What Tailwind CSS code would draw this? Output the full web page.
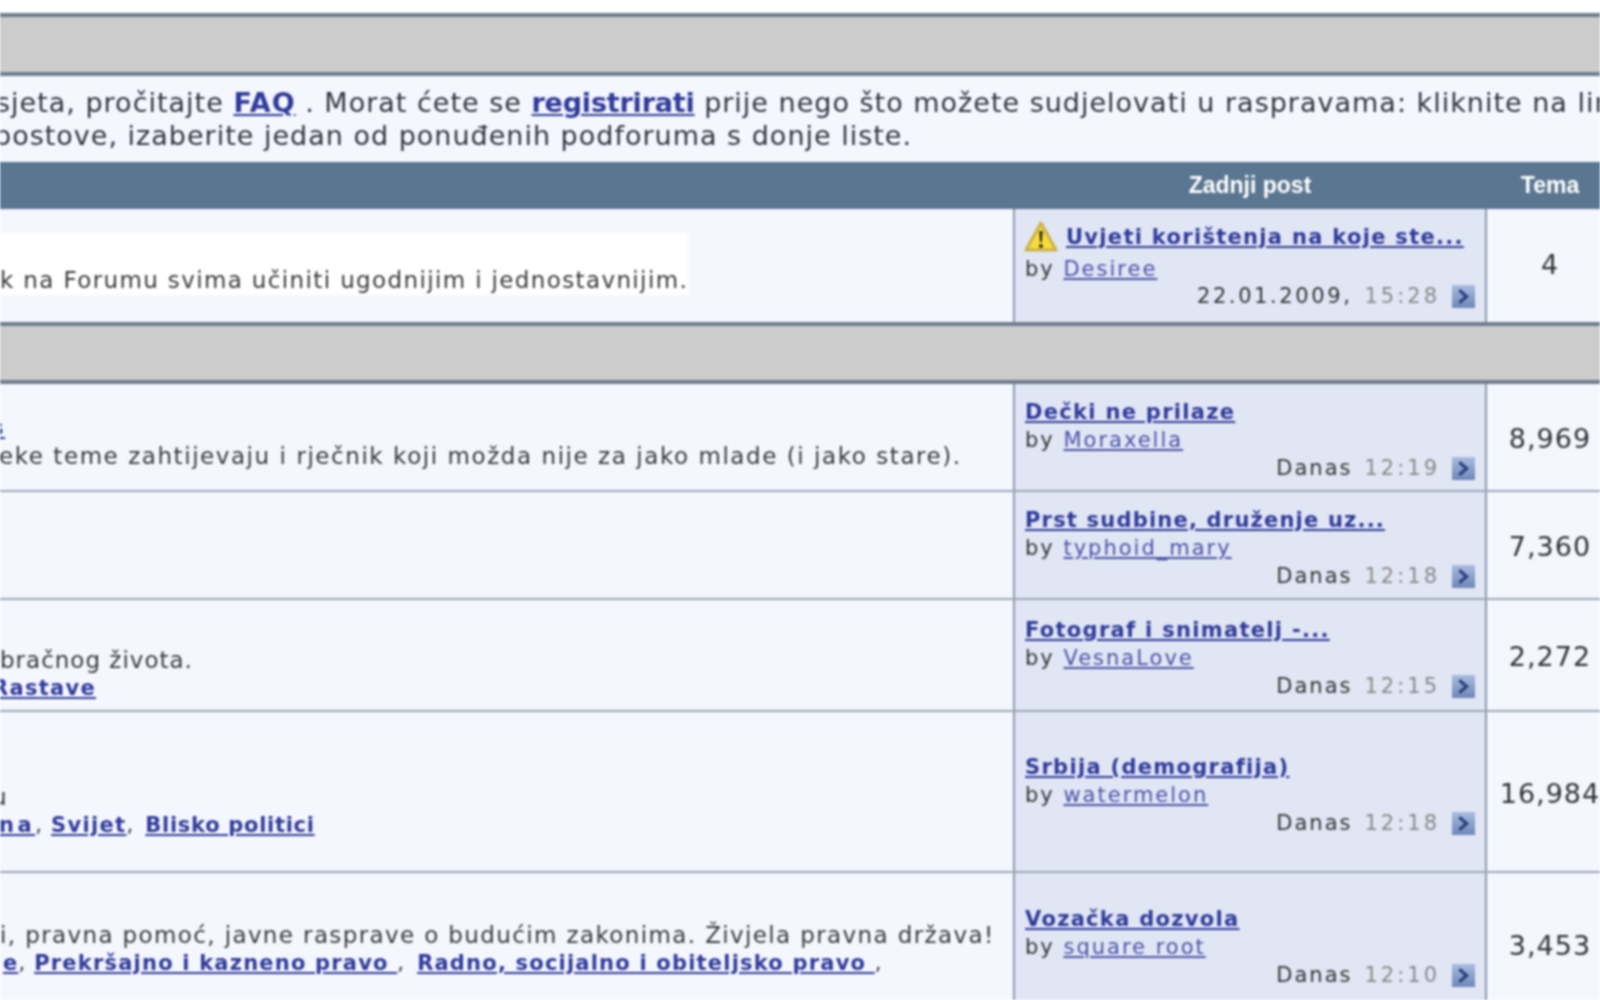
<!doctype html>
<html><head><meta charset="utf-8"><script src="https://cdn.jsdelivr.net/npm/@tailwindcss/browser@4"></script></head>
<body class="bg-white">
<div class="w-[1600px] h-[1000px] overflow-hidden bg-white font-['DejaVu_Sans',sans-serif] text-[#333] blur-[0.8px]">
  <div class="h-[13px]"></div>
  <div class="h-[63px] bg-[#cccccc] border-t-[4px] border-b-[4px] border-[#6f7d8e]"></div>
  <div class="h-[86px] bg-[#f5f7ff] pt-[11px] text-[27px] tracking-[1px] leading-[32px] whitespace-nowrap text-[#33333d]">
    <div class="-ml-[4px]">sjeta, pročitajte <a class="font-bold text-[#2f3a9a] underline">FAQ</a> . Morat ćete se <a class="font-bold text-[#2f3a9a] underline tracking-[-0.2px]">registrirati</a> prije nego što možete sudjelovati u raspravama: kliknite na link</div>
    <div class="-ml-[6px] mt-[1px]">postove, izaberite jedan od ponuđenih podforuma s donje liste.</div>
  </div>
  <div class="flex h-[47px] bg-[#5a7690] text-white font-bold text-[23px] items-center font-['Liberation_Sans',sans-serif]">
    <div class="w-[1013px] shrink-0"></div>
    <div class="w-[474px] shrink-0 text-center">Zadnji post</div>
    <div class="w-[126px] shrink-0 text-center">Tema</div>
  </div>
  <div class="flex h-[113px] bg-[#f5f7ff]">
    <div class="w-[1013px] shrink-0 pt-[24px]">
      <div class="w-[688px] h-[62px] bg-white text-[23px] pt-[33px] leading-[28px] tracking-[1.37px] whitespace-nowrap text-[#3a3a3a]">k na Forumu svima učiniti ugodnijim i jednostavnijim.</div>
    </div>
    <div class="w-[474px] shrink-0 bg-[#e1e6f4] border-x-[2px] border-[#8a9aae] px-[10px] pt-[14px] text-[21px] leading-[28px] tracking-[2px]">
      <div class="flex items-center gap-[7px] h-[28px] whitespace-nowrap">
        <svg width="36" height="34" viewBox="0 0 36 34" class="-ml-[2px] shrink-0"><path d="M18 3 L33 30 L3 30 Z" fill="#f6dc3a" stroke="#cdb04a" stroke-width="3" stroke-linejoin="round"/><path d="M16.4 11h3.2l-.7 11h-1.8z" fill="#222"/><circle cx="18" cy="26" r="1.9" fill="#222"/></svg>
        <a class="font-bold text-[#2f3a9a] underline tracking-[1.3px]">Uvjeti korištenja na koje ste...</a>
      </div>
      <div class="mt-[4px] whitespace-nowrap">by <a class="text-[#4a52a8] underline">Desiree</a></div>
      <div class="flex justify-end items-center gap-[12px] -mt-[1px] whitespace-nowrap"><span class="tracking-[2.6px]">22.01.2009,</span> <span class="text-[#888] tracking-[3px]">15:28</span><svg width="23" height="23" viewBox="0 0 22 22" class="shrink-0"><defs><linearGradient id="a" x1="0" y1="0" x2="0" y2="1"><stop offset="0" stop-color="#a9bde0"/><stop offset="1" stop-color="#6f86b8"/></linearGradient></defs><rect width="22" height="22" fill="url(#a)"/><path d="M7 5l7 6-7 6" fill="none" stroke="#2d3f7a" stroke-width="3"/></svg></div>
    </div>
    <div class="w-[126px] shrink-0 flex items-center justify-center text-[27px] tracking-[1px] pb-[-3px]">4</div>
  </div>
  <div class="h-[62px] bg-[#cccccc] border-t-[4px] border-b-[4px] border-[#6f7d8e]"></div>
  <div class="flex h-[108px] bg-[#f5f7ff] border-b-[2px] border-[#9aa6b8]">
    <div class="w-[1013px] shrink-0 text-[23px] leading-[28px] tracking-[1.56px] whitespace-nowrap text-[#3a3a3a] pt-[30px]">
      <div class="-ml-[9px] text-[21px]"><a class="font-bold text-[#2f3a9a] underline">s</a></div>
      <div class="-ml-[1px]">eke teme zahtijevaju i rječnik koji možda nije za jako mlade (i jako stare).</div>
    </div>
    <div class="w-[474px] shrink-0 bg-[#e1e6f4] border-x-[2px] border-[#8a9aae] px-[10px] pt-[14px] text-[21px] leading-[28px] tracking-[2px]">
      <a class="block font-bold text-[#2f3a9a] underline tracking-[1.3px]">Dečki ne prilaze</a>
      <div class="whitespace-nowrap">by <a class="text-[#4a52a8] underline">Moraxella</a></div>
      <div class="flex justify-end items-center gap-[12px] whitespace-nowrap">Danas <span class="text-[#888] tracking-[3px]">12:19</span><svg width="23" height="23" viewBox="0 0 22 22" class="shrink-0"><rect width="22" height="22" fill="url(#a)"/><path d="M7 5l7 6-7 6" fill="none" stroke="#2d3f7a" stroke-width="3"/></svg></div>
    </div>
    <div class="w-[126px] shrink-0 flex items-center justify-center text-[27px] tracking-[1px] pt-[4px]">8,969</div>
  </div>
  <div class="flex h-[108px] bg-[#f5f7ff] border-b-[2px] border-[#9aa6b8]">
    <div class="w-[1013px] shrink-0"></div>
    <div class="w-[474px] shrink-0 bg-[#e1e6f4] border-x-[2px] border-[#8a9aae] px-[10px] pt-[14px] text-[21px] leading-[28px] tracking-[2px]">
      <a class="block font-bold text-[#2f3a9a] underline tracking-[1.2px]">Prst sudbine, druženje uz...</a>
      <div class="whitespace-nowrap">by <a class="text-[#4a52a8] underline">typhoid_mary</a></div>
      <div class="flex justify-end items-center gap-[12px] whitespace-nowrap">Danas <span class="text-[#888] tracking-[3px]">12:18</span><svg width="23" height="23" viewBox="0 0 22 22" class="shrink-0"><rect width="22" height="22" fill="url(#a)"/><path d="M7 5l7 6-7 6" fill="none" stroke="#2d3f7a" stroke-width="3"/></svg></div>
    </div>
    <div class="w-[126px] shrink-0 flex items-center justify-center text-[27px] tracking-[1px] pt-[4px]">7,360</div>
  </div>
  <div class="flex h-[112px] bg-[#f5f7ff] border-b-[2px] border-[#9aa6b8]">
    <div class="w-[1013px] shrink-0 text-[23px] leading-[28px] tracking-[1px] whitespace-nowrap text-[#3a3a3a] pt-[46px]">
      <div>bračnog života.</div>
      <div class="-ml-[8px] text-[21px] tracking-[1.3px]"><a class="font-bold text-[#2f3a9a] underline">Rastave</a></div>
    </div>
    <div class="w-[474px] shrink-0 bg-[#e1e6f4] border-x-[2px] border-[#8a9aae] px-[10px] pt-[16px] text-[21px] leading-[28px] tracking-[2px]">
      <a class="block font-bold text-[#2f3a9a] underline tracking-[1.3px]">Fotograf i snimatelj -...</a>
      <div class="whitespace-nowrap">by <a class="text-[#4a52a8] underline">VesnaLove</a></div>
      <div class="flex justify-end items-center gap-[12px] whitespace-nowrap">Danas <span class="text-[#888] tracking-[3px]">12:15</span><svg width="23" height="23" viewBox="0 0 22 22" class="shrink-0"><rect width="22" height="22" fill="url(#a)"/><path d="M7 5l7 6-7 6" fill="none" stroke="#2d3f7a" stroke-width="3"/></svg></div>
    </div>
    <div class="w-[126px] shrink-0 flex items-center justify-center text-[27px] tracking-[1px] pt-[5px]">2,272</div>
  </div>
  <div class="flex h-[161px] bg-[#f5f7ff] border-b-[2px] border-[#9aa6b8]">
    <div class="w-[1013px] shrink-0 text-[23px] leading-[28px] tracking-[1.6px] whitespace-nowrap text-[#3a3a3a] pt-[71px]">
      <div class="-ml-[8px]">u</div>
      <div class="text-[21px] tracking-[1.3px] -ml-[1px]"><a class="font-bold text-[#2f3a9a] underline tracking-[3.5px]">na</a>, <a class="font-bold text-[#2f3a9a] underline">Svijet</a>, <a class="font-bold text-[#2f3a9a] underline tracking-[0.7px] ml-[3px]">Blisko politici</a></div>
    </div>
    <div class="w-[474px] shrink-0 bg-[#e1e6f4] border-x-[2px] border-[#8a9aae] px-[10px] pt-[41px] text-[21px] leading-[28px] tracking-[2px]">
      <a class="block font-bold text-[#2f3a9a] underline tracking-[1.3px]">Srbija (demografija)</a>
      <div class="whitespace-nowrap">by <a class="text-[#4a52a8] underline">watermelon</a></div>
      <div class="flex justify-end items-center gap-[12px] whitespace-nowrap">Danas <span class="text-[#888] tracking-[3px]">12:18</span><svg width="23" height="23" viewBox="0 0 22 22" class="shrink-0"><rect width="22" height="22" fill="url(#a)"/><path d="M7 5l7 6-7 6" fill="none" stroke="#2d3f7a" stroke-width="3"/></svg></div>
    </div>
    <div class="w-[126px] shrink-0 flex items-center justify-center text-[27px] tracking-[1px] pt-[6px]">16,984</div>
  </div>
  <div class="flex h-[140px] bg-[#f5f7ff]">
    <div class="w-[1013px] shrink-0 text-[23px] leading-[28px] tracking-[1.38px] whitespace-nowrap text-[#3a3a3a] pt-[48px]">
      <div>i, pravna pomoć, javne rasprave o budućim zakonima. Živjela pravna država!</div>
      <div class="text-[21px] tracking-[1.2px] pl-[3px]"><a class="font-bold text-[#2f3a9a] underline">e</a>, <a class="font-bold text-[#2f3a9a] underline">Prekršajno i kazneno pravo </a>,<a class="font-bold text-[#2f3a9a] underline ml-[12px]">Radno, socijalno i obiteljsko pravo </a>,</div>
    </div>
    <div class="w-[474px] shrink-0 bg-[#e1e6f4] border-x-[2px] border-[#8a9aae] px-[10px] pt-[32px] text-[21px] leading-[28px] tracking-[2px]">
      <a class="block font-bold text-[#2f3a9a] underline tracking-[1.3px]">Vozačka dozvola</a>
      <div class="whitespace-nowrap">by <a class="text-[#4a52a8] underline">square root</a></div>
      <div class="flex justify-end items-center gap-[12px] whitespace-nowrap">Danas <span class="text-[#888] tracking-[3px]">12:10</span><svg width="23" height="23" viewBox="0 0 22 22" class="shrink-0"><rect width="22" height="22" fill="url(#a)"/><path d="M7 5l7 6-7 6" fill="none" stroke="#2d3f7a" stroke-width="3"/></svg></div>
    </div>
    <div class="w-[126px] shrink-0 flex items-center justify-center text-[27px] tracking-[1px] pt-[6px]">3,453</div>
  </div>
</div>
</body></html>
